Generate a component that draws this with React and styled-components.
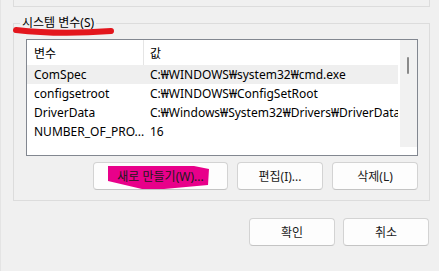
import React from 'react';
import styled, { createGlobalStyle } from 'styled-components';

const GlobalStyle = createGlobalStyle`
  html, body {
    margin: 0;
    background: #f0f0f0;
  }
  body {
    font-family: "Segoe UI", "Noto Sans", "Noto Sans CJK KR", sans-serif;
    font-size: 12px;
    color: #000;
  }
`;

const Page = styled.div`
  position: relative;
  width: 439px;
  height: 271px;
  box-sizing: border-box;
  padding: 0 9px 0 13px;
  border-left: 1px solid #e4e4e4;
  display: flex;
  flex-direction: column;
  overflow: hidden;
`;

const PrevGroupTail = styled.div`
  height: 6px;
  border: 1px solid #dcdcdc;
  border-top: none;
  margin-left: -1px;
`;

const GroupBox = styled.fieldset`
  margin: 8px 0 0 -1px;
  padding: 8px 11px 10px 12px;
  border: 1px solid #dcdcdc;
  min-inline-size: 0;
`;

const Legend = styled.legend`
  margin-left: -6px;
  padding: 0 2px;
  line-height: 16px;
  font-size: 12px;
`;

const ListView = styled.div`
  width: 392px;
  height: 117px;
  box-sizing: border-box;
  border: 1px solid #828790;
  background: #fff;
  display: grid;
  grid-template-columns: 371px 17px;
  column-gap: 2px;
  overflow: hidden;
`;

const ListBody = styled.div`
  display: flex;
  flex-direction: column;
`;

const Header = styled.div`
  display: grid;
  grid-template-columns: 116px 1px 1fr;
  height: 25px;
  align-items: center;
`;

const HeaderCell = styled.div`
  padding-left: ${p => p.$pad}px;
`;

const HeaderSep = styled.div`
  height: 25px;
  background: #e5e5e5;
`;

const Row = styled.div`
  display: grid;
  grid-template-columns: 117px 1fr;
  height: 19px;
  align-items: center;
  background: ${p => (p.$hover ? '#efefef' : 'transparent')};
  white-space: nowrap;
`;

const Cell = styled.div`
  padding-left: ${p => p.$pad}px;
  overflow: hidden;
`;

const ScrollTrack = styled.div`
  height: 107px;
  background: #f1f1f1;
  position: relative;
`;

const ScrollThumb = styled.div`
  position: absolute;
  left: 7px;
  top: 17px;
  width: 2px;
  height: 17px;
  border-radius: 1px;
  background: #8a8a8a;
`;

const ButtonRow = styled.div`
  display: flex;
  justify-content: flex-end;
  gap: 9px;
  margin-top: 6px;
  width: 392px;
`;

const Button = styled.button`
  position: relative;
  width: ${p => p.$w}px;
  height: 28px;
  box-sizing: border-box;
  border: 1px solid #d3d3d3;
  border-bottom-color: #c4c4c4;
  border-radius: 4px;
  background: #fdfdfd;
  font-family: inherit;
  font-size: 12px;
  color: #1a1a1a;
  padding: 0;
`;

const Label = styled.span`
  position: relative;
`;

const Marker = styled.svg`
  position: absolute;
  left: 0;
  top: 0;
`;

const Scribble = styled.svg`
  position: absolute;
  left: 8px;
  top: 24px;
`;

const Footer = styled.div`
  display: flex;
  justify-content: flex-end;
  gap: 8px;
  margin-top: 17px;
  margin-right: 1px;
`;

const vars = [
  { name: 'ComSpec', value: 'C:₩WINDOWS₩system32₩cmd.exe', hover: true },
  { name: 'configsetroot', value: 'C:₩WINDOWS₩ConfigSetRoot' },
  { name: 'DriverData', value: 'C:₩Windows₩System32₩Drivers₩DriverData' },
  { name: 'NUMBER_OF_PRO...', value: '16' },
];

export default function App() {
  return (
    <>
      <GlobalStyle />
      <Page>
        <PrevGroupTail />
        <GroupBox>
          <Legend>시스템 변수(S)</Legend>
          <ListView>
            <ListBody>
              <Header>
                <HeaderCell $pad={7}>변수</HeaderCell>
                <HeaderSep />
                <HeaderCell $pad={6}>값</HeaderCell>
              </Header>
              {vars.map(v => (
                <Row key={v.name} $hover={v.hover}>
                  <Cell $pad={7}>{v.name}</Cell>
                  <Cell $pad={6}>{v.value}</Cell>
                </Row>
              ))}
            </ListBody>
            <ScrollTrack>
              <ScrollThumb />
            </ScrollTrack>
          </ListView>
          <ButtonRow>
            <Button $w={135}>
              <Marker width="135" height="28" viewBox="0 0 135 28">
                <polygon points="14,3 100,3 115,6 114,22 70,26 48,26 14,18" fill="#e8008a" />
              </Marker>
              <Label>새로 만들기(W)...</Label>
            </Button>
            <Button $w={86}>편집(I)...</Button>
            <Button $w={86}>삭제(L)</Button>
          </ButtonRow>
        </GroupBox>
        <Footer>
          <Button $w={86}>확인</Button>
          <Button $w={86}>취소</Button>
        </Footer>
        <Scribble width="110" height="16" viewBox="0 0 110 16">
          <path d="M7 6 Q50 11 102 7" stroke="#e3161d" strokeWidth="6" strokeLinecap="round" fill="none" />
        </Scribble>
      </Page>
    </>
  );
}
